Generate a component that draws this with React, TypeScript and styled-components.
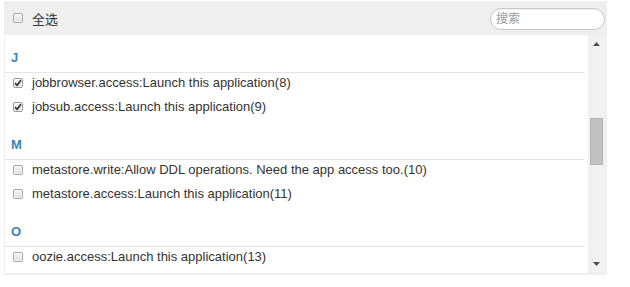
import { FunctionComponent } from 'react';
import styled, { createGlobalStyle } from 'styled-components';

type Permission = {
  id: number;
  name: string;
  checked: boolean;
};

type Group = {
  letter: string;
  items: Permission[];
};

const groups: Group[] = [
  {
    letter: 'J',
    items: [
      { id: 8, name: 'jobbrowser.access:Launch this application', checked: true },
      { id: 9, name: 'jobsub.access:Launch this application', checked: true },
    ],
  },
  {
    letter: 'M',
    items: [
      { id: 10, name: 'metastore.write:Allow DDL operations. Need the app access too.', checked: false },
      { id: 11, name: 'metastore.access:Launch this application', checked: false },
    ],
  },
  {
    letter: 'O',
    items: [{ id: 13, name: 'oozie.access:Launch this application', checked: false }],
  },
];

const GlobalStyle = createGlobalStyle`
  body {
    margin: 0;
    background: #fff;
    font-family: "Liberation Sans", "Noto Sans CJK SC", sans-serif;
    font-size: 13px;
    color: #333;
  }
`;

const Check: FunctionComponent<{ checked?: boolean }> = ({ checked }) => (
  <CheckBox checked={checked}>
    {checked && (
      <svg width="8" height="8" viewBox="0 0 8 8">
        <path d="M1 4.1 L3.1 6.3 L7 1.3" fill="none" stroke="#333" strokeWidth="1.7" />
      </svg>
    )}
  </CheckBox>
);

const Arrow: FunctionComponent<{ down?: boolean }> = ({ down }) => (
  <ArrowButton>
    <svg width="7" height="4" viewBox="0 0 7 4">
      <path d={down ? 'M0 0 H7 L3.5 4 Z' : 'M0 4 H7 L3.5 0 Z'} fill="#4d4d4d" />
    </svg>
  </ArrowButton>
);

const App: FunctionComponent = () => {
  return (
    <>
      <GlobalStyle />
      <Panel>
        <Header>
          <SelectAll>
            <Check />
            <span>全选</span>
          </SelectAll>
          <Search placeholder="搜索" />
        </Header>
        <Body>
          <List>
            {groups.map((group) => (
              <section key={group.letter}>
                <Letter>{group.letter}</Letter>
                <Rows>
                  {group.items.map((item) => (
                    <Row key={item.id}>
                      <Check checked={item.checked} />
                      <span>
                        {item.name}({item.id})
                      </span>
                    </Row>
                  ))}
                </Rows>
              </section>
            ))}
          </List>
          <Scrollbar>
            <Arrow />
            <Track>
              <Thumb />
            </Track>
            <Arrow down />
          </Scrollbar>
        </Body>
      </Panel>
    </>
  );
};

export default App;

const Panel = styled.div`
  display: flex;
  flex-direction: column;
  width: 600px;
  margin: 1px 0 0 4px;
  padding: 0 2px 2px 1px;
  background: #efefef;
`;

const Header = styled.div`
  display: flex;
  align-items: center;
  justify-content: space-between;
  height: 34px;
  padding: 0 0 0 8px;
`;

const SelectAll = styled.label`
  display: flex;
  align-items: center;
  gap: 9px;
  color: #333;
`;

const CheckBox = styled.span<{ checked?: boolean }>`
  display: inline-flex;
  align-items: center;
  justify-content: center;
  box-sizing: border-box;
  width: 10px;
  height: 10px;
  flex-shrink: 0;
  border: 1px solid ${(p) => (p.checked ? '#9c9c9c' : '#a6a6a6')};
  border-radius: 2px;
  background: linear-gradient(#f4f4f4, #dedede);
  box-shadow: inset 0 0 0 1px rgba(255, 255, 255, 0.6);
`;

const Search = styled.input`
  box-sizing: border-box;
  width: 115px;
  height: 22px;
  margin-top: 1px;
  padding: 0 5px;
  border: 1px solid #c8c8c8;
  border-radius: 11px;
  background: #fff;
  box-shadow: inset 0 1px 1px rgba(0, 0, 0, 0.06);
  font-family: "Liberation Sans", "Noto Sans CJK SC", sans-serif;
  font-size: 12px;
  outline: none;
  &::placeholder {
    color: #999;
  }
`;

const Body = styled.div`
  display: flex;
  height: 238px;
`;

const List = styled.div`
  flex: 1;
  padding-top: 13px;
  background: #fff;
  overflow: hidden;
`;

const Letter = styled.h4`
  margin: 19px 3px 0 0;
  padding: 0 6px 4px;
  height: 20px;
  line-height: 20px;
  border-bottom: 1px solid #e5e5e5;
  color: #3a84bd;
  font-size: 13px;
  font-weight: bold;
  section:first-child > & {
    margin-top: 0;
  }
`;

const Rows = styled.div`
  display: flex;
  flex-direction: column;
  gap: 5px;
`;

const Row = styled.label`
  display: flex;
  align-items: center;
  gap: 9px;
  height: 19px;
  padding-left: 8px;
  line-height: 19px;
  white-space: nowrap;
`;

const Scrollbar = styled.div`
  display: flex;
  flex-direction: column;
  width: 17px;
  background: #f1f1f1;
  margin-bottom: 1px;
`;

const ArrowButton = styled.div`
  display: flex;
  align-items: center;
  justify-content: center;
  height: 17px;
`;

const Track = styled.div`
  flex: 1;
  padding: 0 2px;
`;

const Thumb = styled.div`
  height: 47px;
  margin-top: 66px;
  background: #c1c1c1;
  border: 1px solid #b4b4b4;
  box-sizing: border-box;
`;
